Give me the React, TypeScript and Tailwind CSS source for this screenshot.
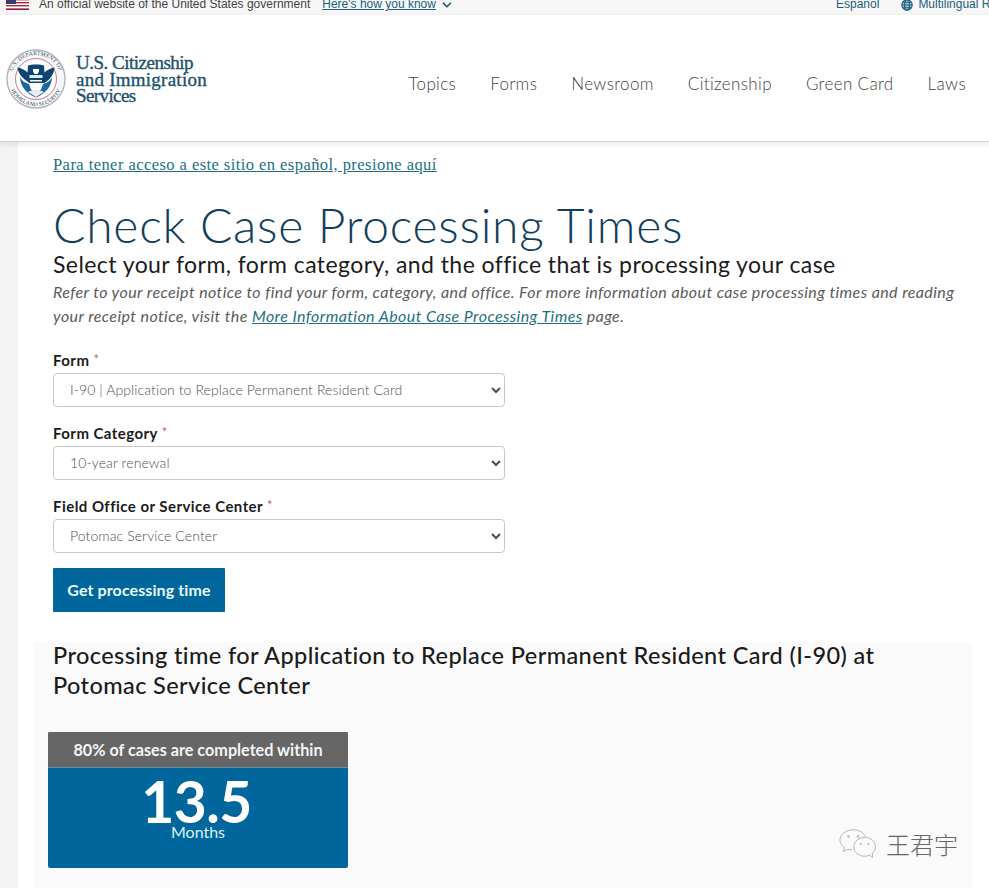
import { useId } from 'react';
import { ChevronDown } from 'lucide-react';

const navItems = ['Topics', 'Forms', 'Newsroom', 'Citizenship', 'Green Card', 'Laws'];

const formFields = [
  { label: 'Form', value: 'I-90 | Application to Replace Permanent Resident Card' },
  { label: 'Form Category', value: '10-year renewal' },
  { label: 'Field Office or Service Center', value: 'Potomac Service Center' },
];

function UsFlag() {
  return (
    <svg width="23" height="11" viewBox="0 0 23 11" className="shrink-0">
      <rect width="23" height="11" fill="#fff" />
      <rect y="0" width="23" height="1.4" fill="#b22234" />
      <rect y="3" width="23" height="1.4" fill="#b22234" />
      <rect y="6" width="23" height="1.4" fill="#b22234" />
      <rect y="9.4" width="23" height="1.6" fill="#8c1d40" />
      <rect width="10" height="5" fill="#3c3b6e" />
    </svg>
  );
}

function Globe() {
  return (
    <svg width="12" height="12" viewBox="0 0 12 12" fill="none" stroke="#1c5f7d" strokeWidth="1.1" className="shrink-0">
      <circle cx="6" cy="6" r="5.2" fill="#a9c5d2" />
      <ellipse cx="6" cy="6" rx="2.4" ry="5.2" />
      <path d="M.8 6h10.4M1.6 3.2h8.8M1.6 8.8h8.8" />
    </svg>
  );
}

function DhsSeal() {
  const id = useId();
  return (
    <svg width="60" height="60" viewBox="0 0 60 60" className="shrink-0">
      <defs>
        <path id={id + 'top'} d="M5.500 36a25 25 0 1 1 49 0" />
        <path id={id + 'bot'} d="M3.500 37a27.500 27.500 0 0 0 53 0" />
      </defs>
      <circle cx="30" cy="30" r="29" fill="#f6f7f8" stroke="#aeb6bb" strokeWidth="1.4" />
      <circle cx="30" cy="30" r="20.500" fill="#fff" stroke="#a8485c" strokeWidth="0.7" />
      <text fontSize="5.6" fill="#3a4c5a" letterSpacing="0.2" fontFamily="'Liberation Serif', serif">
        <textPath href={'#' + id + 'top'} startOffset="50%" textAnchor="middle">U.S. DEPARTMENT OF</textPath>
      </text>
      <text fontSize="5.6" fill="#3a4c5a" letterSpacing="0.1" fontFamily="'Liberation Serif', serif">
        <textPath href={'#' + id + 'bot'} startOffset="50%" textAnchor="middle">HOMELAND SECURITY</textPath>
      </text>
      {/* eagle wings and head */}
      <path d="M11.500 18.500c4.500 1 7.500 2.500 10 5l.5-7c2.500-1.500 13.500-1.500 16 0l.5 7c2.500-2.500 5.500-4 10-5-.5 6-3.500 11-8 14l-2 1.500H23.500L21.500 32.500c-4.500-3-9.500-8-10-14z" fill="#0d4473" />
      <path d="M27 20h6v2.500l-1.500 2.500h-3L27 22.500z" fill="#fff" />
      <path d="M23.500 26h13v3h-13z" fill="#dfe8ee" />
      {/* lower wings */}
      <path d="M14 28.500c2 3.500 5 5.500 9 6.500l2 5.500 5 4 5-4 2-5.500c4-1 7-3 9-6.500-.5 8-5 15.500-16 20-11-4.500-15.500-12-16-20z" fill="#1d66a0" />
      <path d="M24 31h12v1.600H24zM25 34.200h10v1.600H25zM26 37.400h8V39H26z" fill="#f4f7f9" />
      <path d="M22 43c2-2.500 14-2.500 16 0l-8 5z" fill="#e6ecef" />
    </svg>
  );
}

function WeChatMark() {
  return (
    <svg width="38" height="32" viewBox="0 0 40 32" fill="none" stroke="#b4b4b4" strokeWidth="1" className="shrink-0">
      <path d="M15 1C7.500 1 1 6 1 12c0 3.500 2 6 5 8l-1.500 4 5-2.500c1.500.5 3 .7 4.500.7" fill="#fafafa" />
      <path d="M15 1c6.500 0 12 3.500 13.500 9" />
      <ellipse cx="27" cy="19" rx="11.500" ry="10" fill="#fbfbfb" />
      <path d="M32 27.500l3.500 3-.5-5" fill="#fbfbfb" />
      <circle cx="10" cy="8" r="1.300" fill="#b4b4b4" stroke="none" />
      <circle cx="20" cy="8" r="1.300" fill="#b4b4b4" stroke="none" />
      <circle cx="23" cy="16" r="1.100" fill="#b4b4b4" stroke="none" />
      <circle cx="31" cy="16" r="1.100" fill="#b4b4b4" stroke="none" />
    </svg>
  );
}

function SelectField({ label, value }: { label: string; value: string }) {
  return (
    <div className="flex flex-col">
      <label className="h-[26px] text-[15px] leading-[24px] font-[Lato,sans-serif] font-bold tracking-[0.45px] text-[#1b1b1b]">
        {label} <span className="align-[2px] text-[13px] font-normal text-[#c2685f]">*</span>
      </label>
      <select
        defaultValue={value}
        className="h-[34px] w-[452px] rounded-[4px] border border-[#c9c9c9] bg-white pb-[2px] pl-3 text-[14px] font-[Lato,sans-serif] font-light tracking-[0.1px] text-[#4f4f4f]"
      >
        <option>{value}</option>
      </select>
    </div>
  );
}

export default function App() {
  return (
    <div className="relative h-[888px] w-[989px] overflow-hidden bg-[#f3f3f3] font-[Lato,sans-serif]">
      {/* Gov banner */}
      <div className="flex h-[15px] items-end justify-between overflow-hidden bg-[#f7f7f7] pl-[6px] font-['Liberation_Sans',sans-serif] text-[12px] leading-[15px]">
        <div className="flex h-[15px] -translate-y-[3px] items-center">
          <UsFlag />
          <span className="ml-[10px] text-[#444]">An official website of the United States government</span>
          <a className="ml-3 text-[#1c5f7d] underline">Here's how you know</a>
          <ChevronDown className="ml-1 text-[#1c5f7d]" size={14} strokeWidth={3} />
        </div>
        <div className="flex h-[15px] w-[153px] shrink-0 -translate-y-[3px] items-center whitespace-nowrap text-[#1c5f7d]">
          <span>Espanol</span>
          <span className="mx-[11px] h-[20px] w-px bg-[#d5d5d5]" />
          <Globe />
          <span className="ml-[5px]">Multilingual Resources</span>
        </div>
      </div>

      {/* Header */}
      <header className="relative z-10 flex h-[127px] items-center justify-between border-b border-[#d6d6d6] bg-white pr-[23px] pl-[6px] shadow-[0_2px_6px_rgba(0,0,0,0.1)]">
        <div className="flex items-center gap-[10px] pt-[2px]">
          <DhsSeal />
          <div className="pt-[2px] font-['Liberation_Serif',serif] text-[19px] leading-[16.500px] text-[#21506b] [-webkit-text-stroke:0.35px_#21506b]">
            <div className="tracking-[-0.5px]">U.S. Citizenship</div>
            <div className="tracking-[0.25px]">and Immigration</div>
            <div className="tracking-[-0.6px]">Services</div>
          </div>
        </div>
        <nav className="flex gap-[34px] pt-[11px] text-[17px] font-light tracking-[0.35px] text-[#3f3f3f]">
          {navItems.map((item) => (
            <a key={item}>{item}</a>
          ))}
        </nav>
      </header>

      {/* Page body */}
      <div className="ml-[18px] h-full bg-white">
        <main className="pt-[10px] pl-[35px]">
          <a className="font-['Liberation_Serif',serif] text-[16.500px] leading-[20px] tracking-[0.44px] text-[#1f6f7f] underline">
            Para tener acceso a este sitio en español, presione aquí
          </a>
          <h1 className="mt-[19px] text-[48px] leading-[60px] font-light tracking-[0.75px] text-[#123e5c]">
            Check Case Processing Times
          </h1>
          <h2 className="-mt-[1px] text-[23px] leading-[20px] tracking-[0.43px] text-[#1b1b1b]">
            Select your form, form category, and the office that is processing your case
          </h2>
          <p className="mt-[6px] w-[920px] text-[16px] leading-[24px] italic tracking-[0.41px] text-[#5a5a5a]">
            Refer to your receipt notice to find your form, category, and office. For more information about case processing times and reading your receipt notice, visit the{' '}
            <a className="text-[#1f6f7f] underline">More Information About Case Processing Times</a> page.
          </p>

          <div className="mt-[19px] flex flex-col gap-[13px]">
            {formFields.map((field) => (
              <SelectField key={field.label} label={field.label} value={field.value} />
            ))}
          </div>

          <button className="mt-[15px] h-[44px] w-[172px] rounded-[1px] bg-[#00669b] text-[16px] font-bold tracking-[0.1px] text-[#e6fbff]">
            Get processing time
          </button>
        </main>

        <section className="mt-[30px] ml-[15px] flex h-[260px] w-[939px] flex-col bg-[#fafafa] pl-[20px]">
          <h3 className="-mt-[2px] w-[860px] text-[23.500px] leading-[30px] font-medium tracking-[0.4px] text-[#1b1b1b]">
            Processing time for Application to Replace Permanent Resident Card (I-90) at Potomac Service Center
          </h3>
          <div className="mt-[32px] -ml-[5px] h-[136px] w-[300px] overflow-hidden rounded-[2px] bg-[#00669b] text-center">
            <div className="h-[36px] border-b border-[#6c8fa3] bg-[#666] text-[16.200px] leading-[35px] font-bold text-[#f4f4f4]">
              80% of cases are completed within
            </div>
            <div className="mt-[10px] pr-[3px] text-[57px] leading-[46px] font-bold tracking-[-0.5px] text-white">13.5</div>
            <div className="text-[16px] leading-[16px] font-normal text-[#d8f3ff]">Months</div>
          </div>
        </section>
      </div>

      {/* Watermark */}
      <div className="absolute right-[31px] bottom-[28px] flex items-center gap-[9px]">
        <WeChatMark />
        <span className="font-['Noto_Sans_CJK_SC',sans-serif] text-[24px] leading-[26px] font-light tracking-[0px] text-[#666]">王君宇</span>
      </div>
    </div>
  );
}
